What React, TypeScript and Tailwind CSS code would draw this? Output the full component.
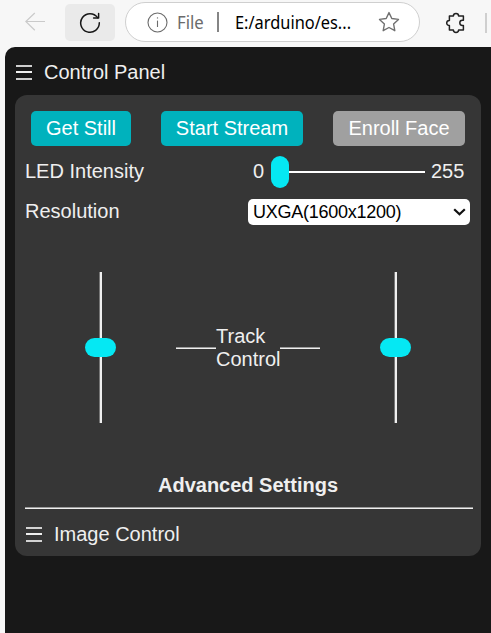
function MenuIcon() {
  return (
    <svg width="16" height="15" viewBox="0 0 16 15" fill="#efefef" shapeRendering="crispEdges">
      <rect y="0" width="16" height="2" fillOpacity="0.85" />
      <rect y="6" width="16" height="2" />
      <rect y="13" width="16" height="2" fillOpacity="0.85" />
    </svg>
  );
}

function BrowserBar() {
  return (
    <header className="flex h-[47px] items-start bg-[#f7f7f7]">
      <div className="flex h-[44px] w-[65px] items-center pl-[25px]">
        <svg width="20" height="20" viewBox="0 0 20 20" fill="none" stroke="#cacaca" strokeWidth="1.2">
          <path d="M20 9.5H0.8M9.8 1L0.8 9.5L9.8 18.2" />
        </svg>
      </div>
      <div className="mt-[4px] flex h-[37px] w-[50px] items-center justify-center rounded-[5px] bg-[#eaeaea]">
        <svg width="22" height="22" viewBox="0 0 22 22" fill="none" stroke="#161616" strokeWidth="1.5" strokeLinecap="round" strokeLinejoin="round">
          <path d="M18.6 5.6A9.3 9.3 0 1 0 20.3 10.7" />
          <path d="M19.6 1.4V6H14.6" />
        </svg>
      </div>
      <div className="ml-[10px] mt-[2px] flex h-[40px] w-[295px] items-center rounded-full border border-[#cfcfcf] bg-white pl-[21px] font-['Noto_Sans','Open_Sans',sans-serif] text-[18px]">
        <svg width="21" height="21" viewBox="0 0 21 21" fill="none" stroke="#6b6b6b" strokeWidth="1.1">
          <circle cx="10.5" cy="10.5" r="9.5" />
          <path d="M10.5 8.6V15" />
          <circle cx="10.5" cy="5.9" r="0.7" fill="#6b6b6b" stroke="none" />
        </svg>
        <span className="ml-[9px] w-[40px] whitespace-nowrap text-[#6b6b6b]"><span className="inline-block origin-left scale-x-[0.93]">File</span></span>
        <span className="h-[20px] w-[2px] bg-[#858585]" />
        <span className="ml-[16px] w-[143px] whitespace-nowrap text-black"><span className="inline-block origin-left scale-x-[0.91]">E:/arduino/es...</span></span>
        <svg width="22" height="22" viewBox="0 0 22 22" fill="none" stroke="#707070" strokeWidth="1.4" strokeLinejoin="round">
          <path d="M11 1.6L13.8 7.5L20.5 8.4L15.6 13L16.8 19.7L11 16.5L5.2 19.7L6.4 13L1.5 8.4L8.2 7.5Z" />
        </svg>
      </div>
      <svg className="ml-[25px] mt-[12px]" width="22" height="22" viewBox="0 0 22 22" fill="none" stroke="#222" strokeWidth="1.5" strokeLinejoin="round">
        <path d="M4.4 4H8.4C8.4 2.5 9.6 1.6 11 1.6S13.6 2.5 13.6 4H18.4V8.2H17.4C15.9 8.2 14.8 9.4 14.8 10.8S15.9 13.4 17.4 13.4H18.4V18H13.6C13.6 19.6 12.4 20.4 11 20.4S8.4 19.6 8.4 18H4.4V13.6C2.8 13.6 1.7 12.4 1.7 11S2.8 8.4 4.4 8.4Z" />
      </svg>
      <span className="ml-[18px] mt-[13px] h-[20px] w-[2px] bg-[#cfcfcf]" />
    </header>
  );
}

function TrackSlider() {
  return (
    <div className="flex h-[151px] w-[32px] flex-col items-center">
      <div className="h-[66px] w-[3px] border-l border-[#777] bg-[#efefef]" />
      <div className="h-[19px] w-[31px] rounded-full bg-[#05e8f3]" />
      <div className="h-[66px] w-[3px] border-l border-[#777] bg-[#efefef]" />
    </div>
  );
}

export default function App() {
  return (
    <div className="h-[633px] w-[491px] overflow-hidden bg-[#f7f7f7] font-['Liberation_Sans',Arial,sans-serif] text-[20px] leading-[23px] text-[#efefef]">
      <BrowserBar />
      <main className="ml-[5px] h-[586px] rounded-tl-[10px] bg-[#181818] pl-[10px] pr-[10px]">
        <div className="flex h-[48px] items-center pl-px pt-[2px]">
          <MenuIcon />
          <span className="ml-[12px]">Control Panel</span>
        </div>
        <section className="h-[461px] w-[466px] rounded-[12px] bg-[#363636] pl-[10px] pr-[8px] pt-[16px]">
          <div className="flex h-[35px] gap-[30px] pl-[6px] text-white">
            <button className="w-[100px] whitespace-nowrap rounded-[5px] bg-[#00b2bd]">Get Still</button>
            <button className="w-[142px] whitespace-nowrap rounded-[5px] bg-[#00b2bd]">Start Stream</button>
            <button className="w-[132px] whitespace-nowrap rounded-[5px] bg-[#a0a0a0]">Enroll Face</button>
          </div>
          <div className="mt-[10px] flex h-[32px] items-center">
            <span className="w-[228px] pb-[2px]">LED Intensity</span>
            <span className="w-[18px] pb-[2px]">0</span>
            <div className="h-[32px] w-[18px] rounded-full bg-[#05e8f3]" />
            <div className="h-[2px] w-[136px] bg-white" />
            <span className="ml-[6px] pb-[2px]">255</span>
          </div>
          <div className="mt-[11px] flex h-[26px] items-center">
            <span className="w-[223px] pb-[2px]">Resolution</span>
            <div className="flex h-[26px] w-[222px] items-center justify-between rounded-[5px] bg-white pl-[5px] pr-[4px] text-[18px] text-black">
              <span className="tracking-[-0.25px]">UXGA(1600x1200)</span>
              <svg width="13" height="8" viewBox="0 0 13 8" fill="none" stroke="#111" strokeWidth="2.2">
                <path d="M1.2 1.2L6.5 6.3L11.8 1.2" />
              </svg>
            </div>
          </div>
          <div className="mt-[47px] flex h-[151px] items-center pl-[59px]">
            <TrackSlider />
            <div className="ml-[60px] flex w-[144px] items-center">
              <div className="h-[2px] w-[40px] border-t border-[#9a9a9a] bg-[#efefef]" />
              <div className="w-[64px]">Track Control</div>
              <div className="h-[2px] w-[40px] border-t border-[#9a9a9a] bg-[#efefef]" />
            </div>
            <div className="ml-[59px]"><TrackSlider /></div>
          </div>
          <h2 className="mt-[51px] pr-[2px] text-center font-bold">Advanced Settings</h2>
          <div className="mt-[10px] h-[2px] border-t border-[#9a9a9a] bg-[#efefef]" />
          <div className="mt-[14px] flex items-center pl-px">
            <MenuIcon />
            <span className="ml-[12px]">Image Control</span>
          </div>
        </section>
      </main>
    </div>
  );
}
